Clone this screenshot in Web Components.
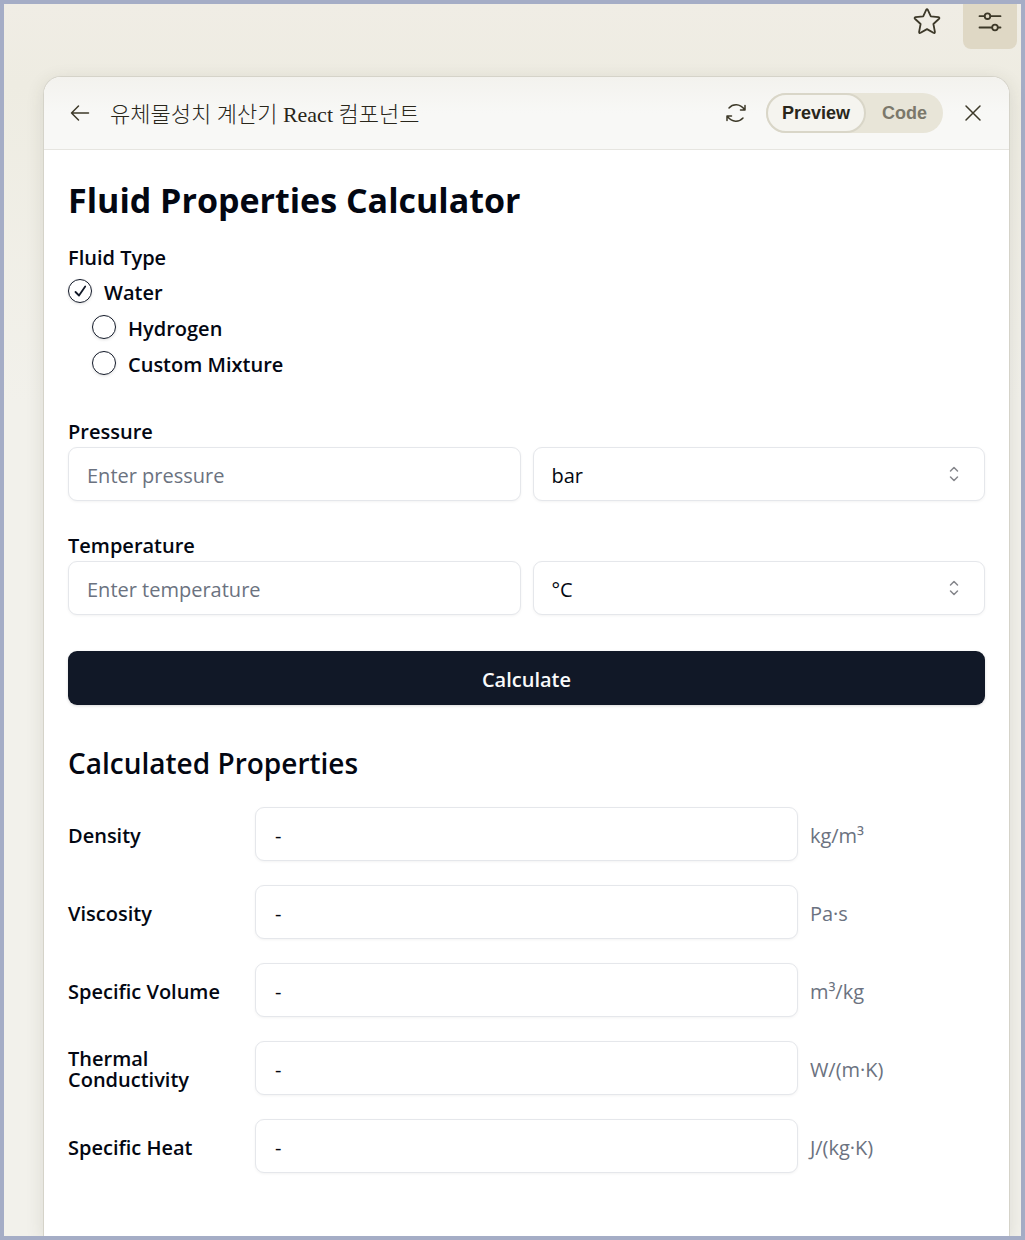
<!DOCTYPE html>
<html lang="ko">
<head>
<meta charset="UTF-8">
<meta name="viewport" content="width=device-width, initial-scale=1.0">
<title>Fluid Properties Calculator</title>
<style>
    body {
        margin: 0;
        font-family: "Segoe UI", "Open Sans", "Noto Sans", sans-serif;
        color: #030712;
    }
</style>
</head>
<body>
<app-shell>
    <top-bar slot="top"></top-bar>
    <artifact-panel title-text="유체물성치 계산기 React 컴포넌트">
        <fluid-calculator></fluid-calculator>
    </artifact-panel>
</app-shell>

<script>
// Window frame: coloured border, toolbar on top, panel below
class AppShell extends HTMLElement {
    constructor() {
        super();
        this.attachShadow({ mode: 'open' });
        this.shadowRoot.innerHTML = `
            <style>
                :host {
                    display: flex;
                    flex-direction: column;
                    box-sizing: border-box;
                    min-height: 100vh;
                    border: 4px solid #a5adc6;
                    background: linear-gradient(#f0ede5, #eeece2 80px, #f2f1eb 400px);
                }
                main {
                    flex: 1;
                    display: flex;
                    flex-direction: column;
                    margin: 27px 11px 0 39px;
                }
            </style>
            <slot name="top"></slot>
            <main><slot></slot></main>
        `;
    }
}
customElements.define('app-shell', AppShell);

class TopBar extends HTMLElement {
    constructor() {
        super();
        this.attachShadow({ mode: 'open' });
        this.shadowRoot.innerHTML = `
            <style>
                :host {
                    display: flex;
                    justify-content: flex-end;
                    gap: 9px;
                    padding-right: 4px;
                }
                button {
                    display: grid;
                    justify-items: center;
                    width: 54px;
                    height: 45px;
                    padding: 3px 0 0;
                    border: 0;
                    border-radius: 0 0 8px 8px;
                    background: none;
                    color: #3d3929;
                    cursor: pointer;
                }
                .active {
                    background: #dfd8c5;
                }
                svg {
                    fill: none;
                    stroke: currentColor;
                    stroke-width: 1.8;
                    stroke-linecap: round;
                    stroke-linejoin: round;
                }
            </style>
            <button type="button" aria-label="Star">
                <svg width="30" height="30" viewBox="0 0 30 30">
                    <path d="M14.2 2.8Q15 1.400 15.800 2.800L18.800 9.400L26.400 10.200Q28.200 10.600 26.800 12L21.400 17L22.900 24.800Q23 26.600 21.400 25.800L15 22.100L8.600 25.800Q7 26.600 7.100 24.800L8.600 17L3.200 12Q1.800 10.600 3.600 10.200L11.200 9.400Z"/>
                </svg>
            </button>
            <button class="active" type="button" aria-label="Settings">
                <svg width="30" height="30" viewBox="0 0 30 30">
                    <path d="M4.500 9.200H9.500M15.500 9.200H25.500M4.500 20.500H17M23 20.500H25.500"/>
                    <circle cx="12.500" cy="9.200" r="2.800"/>
                    <circle cx="20" cy="20.500" r="2.800"/>
                </svg>
            </button>
        `;
    }
}
customElements.define('top-bar', TopBar);

class ArtifactPanel extends HTMLElement {
    constructor() {
        super();
        this.attachShadow({ mode: 'open' });
        this.shadowRoot.innerHTML = `
            <style>
                :host {
                    flex: 1;
                    display: flex;
                    flex-direction: column;
                    border: 1px solid #d5d3c9;
                    border-bottom: 0;
                    border-radius: 18px 18px 0 0;
                    background: #fff;
                    box-shadow: 0 4px 18px rgba(60, 57, 41, 0.12);
                    clip-path: inset(-30px -30px 0 -30px);
                }
                header {
                    display: flex;
                    align-items: center;
                    height: 72px;
                    padding: 0 24px;
                    border-bottom: 1px solid #e6e5e0;
                    border-radius: 17px 17px 0 0;
                    background: linear-gradient(#f3f2ee, #f8f8f6 50%);
                    color: #29261b;
                }
                h2 {
                    flex: 1;
                    margin: 0 0 0 18px;
                    padding-top: 3px;
                    font: 300 22px/30px "Liberation Serif", "Noto Sans CJK KR", serif;
                    white-space: nowrap;
                }
                button {
                    border: 0;
                    background: none;
                    color: inherit;
                    cursor: pointer;
                }
                .icon {
                    display: grid;
                    padding: 0;
                }
                svg {
                    fill: none;
                    stroke: #3d3929;
                    stroke-width: 1.5;
                    stroke-linecap: round;
                    stroke-linejoin: round;
                }
                .tabs {
                    display: flex;
                    margin: 0 18px;
                    border-radius: 20px;
                    background: #e8e5d8;
                }
                .tabs button {
                    height: 40px;
                    padding: 0 14px;
                    border: 2px solid transparent;
                    border-radius: 20px;
                    font: 700 18px/24px "Liberation Sans", sans-serif;
                    color: #7b786b;
                }
                .tabs .selected {
                    border-color: #d9d6c8;
                    background: #f5f4ef;
                    color: #29261b;
                }
            </style>
            <header>
                <button class="icon" type="button" aria-label="Back">
                    <svg width="24" height="24" viewBox="0 0 24 24"><path d="M20.500 12H3.500M10.500 5L3.500 12L10.500 19"/></svg>
                </button>
                <h2></h2>
                <button class="icon" type="button" aria-label="Refresh">
                    <svg width="24" height="24" viewBox="0 0 24 24">
                        <path d="M5 7Q8 3.600 12.500 3.800Q17 4 20.800 8.800M21 4.500V9H16.500M19 17Q16 20.400 11.500 20.200Q7 20 3.200 15.200M3 19.500V15H7.500"/>
                    </svg>
                </button>
                <div class="tabs" role="tablist">
                    <button class="selected" type="button" role="tab" aria-selected="true">Preview</button>
                    <button type="button" role="tab" aria-selected="false">Code</button>
                </div>
                <button class="icon" type="button" aria-label="Close">
                    <svg width="24" height="24" viewBox="0 0 24 24"><path d="M5 5L19 19M19 5L5 19"/></svg>
                </button>
            </header>
            <slot></slot>
        `;
    }

    connectedCallback() {
        this.shadowRoot.querySelector('h2').textContent = this.getAttribute('title-text');
    }
}
customElements.define('artifact-panel', ArtifactPanel);

// Label over a number input and a unit select
class UnitField extends HTMLElement {
    constructor() {
        super();
        this.attachShadow({ mode: 'open' });
    }

    connectedCallback() {
        const units = this.getAttribute('units').split(',');
        this.shadowRoot.innerHTML = `
            <style>
                :host {
                    display: block;
                }
                label {
                    display: block;
                    padding-bottom: 6px;
                    font-weight: 600;
                    line-height: 18px;
                }
                .row {
                    display: grid;
                    grid-template-columns: 1fr 1fr;
                    gap: 12px;
                }
                input, select {
                    box-sizing: border-box;
                    width: 100%;
                    height: 54px;
                    padding: 3px 18px 0;
                    border: 1px solid #e5e7eb;
                    border-radius: 9px;
                    background: #fff;
                    box-shadow: 0 1px 3px rgba(0, 0, 0, 0.05);
                    font: inherit;
                    color: inherit;
                    appearance: none;
                }
                input::placeholder {
                    color: #6b7280;
                    opacity: 1;
                }
                .select {
                    display: grid;
                    align-items: center;
                }
                .select > * {
                    grid-area: 1 / 1;
                }
                svg {
                    justify-self: end;
                    margin-right: 19px;
                    fill: none;
                    stroke: #85868b;
                    stroke-width: 1.5;
                    stroke-linecap: round;
                    stroke-linejoin: round;
                    pointer-events: none;
                }
            </style>
            <label for="value">${this.getAttribute('label')}</label>
            <div class="row">
                <input id="value" type="text" inputmode="decimal" placeholder="${this.getAttribute('placeholder')}">
                <div class="select">
                    <select aria-label="${this.getAttribute('label')} unit">
                        ${units.map(u => `<option>${u}</option>`).join('')}
                    </select>
                    <svg width="24" height="24" viewBox="0 0 24 24"><path d="M8.500 9L12 5.500L15.500 9M8.500 15L12 18.500L15.500 15"/></svg>
                </div>
            </div>
        `;
    }
}
customElements.define('unit-field', UnitField);

// Read-only result: name, value box, unit
class PropertyRow extends HTMLElement {
    constructor() {
        super();
        this.attachShadow({ mode: 'open' });
    }

    connectedCallback() {
        this.shadowRoot.innerHTML = `
            <style>
                :host {
                    display: grid;
                    grid-template-columns: 10fr 31fr 10fr;
                    align-items: center;
                    gap: 12px;
                }
                label {
                    padding-top: 2px;
                    font-weight: 600;
                    line-height: 21px;
                }
                input {
                    box-sizing: border-box;
                    width: 100%;
                    height: 54px;
                    padding: 2px 19px 0;
                    border: 1px solid #e5e7eb;
                    border-radius: 9px;
                    background: #fff;
                    box-shadow: 0 1px 3px rgba(0, 0, 0, 0.05);
                    font: inherit;
                    color: inherit;
                }
                .unit {
                    padding-top: 3px;
                    color: #6b7280;
                }
            </style>
            <label for="result">${this.getAttribute('label')}</label>
            <input id="result" type="text" value="-" readonly>
            <span class="unit">${this.getAttribute('unit')}</span>
        `;
    }
}
customElements.define('property-row', PropertyRow);

class FluidCalculator extends HTMLElement {
    constructor() {
        super();
        this.attachShadow({ mode: 'open' });
        this.shadowRoot.innerHTML = `
            <style>
                :host {
                    display: block;
                    padding: 24px;
                    font-size: 20px;
                    line-height: 30px;
                }
                h1 {
                    margin: 0 0 20px;
                    font-size: 34px;
                    font-weight: 700;
                    line-height: 52px;
                }
                form {
                    display: flex;
                    flex-direction: column;
                    gap: 36px;
                }
                fieldset {
                    display: flex;
                    flex-direction: column;
                    gap: 12px;
                    min-width: 0;
                    margin: 0;
                    padding: 0 0 12px;
                    border: 0;
                    font-weight: 600;
                }
                legend {
                    margin-bottom: 9px;
                    padding: 0;
                    line-height: 24px;
                }
                .option {
                    display: grid;
                    grid-template-columns: 24px auto;
                    justify-content: start;
                    align-items: center;
                    column-gap: 12px;
                }
                .option label {
                    padding-top: 3px;
                    line-height: 21px;
                }
                .nested {
                    margin-left: 24px;
                }
                .option input, .option svg {
                    grid-area: 1 / 1;
                }
                .option input {
                    width: 24px;
                    height: 24px;
                    margin: 0;
                    border: 1px solid #111827;
                    border-radius: 50%;
                    box-shadow: 0 1px 3px rgba(0, 0, 0, 0.12);
                    appearance: none;
                }
                .option svg {
                    visibility: hidden;
                    fill: none;
                    stroke: #111827;
                    stroke-width: 1.8;
                    stroke-linecap: round;
                    stroke-linejoin: round;
                    pointer-events: none;
                }
                .option input:checked + svg {
                    visibility: visible;
                }
                button {
                    height: 54px;
                    padding: 3px 24px 0;
                    border: 0;
                    border-radius: 9px;
                    background: #111827;
                    box-shadow: 0 1px 3px rgba(0, 0, 0, 0.15);
                    font: inherit;
                    font-weight: 600;
                    color: #f9fafb;
                    cursor: pointer;
                }
                h2 {
                    margin: 36px 0 22px;
                    font-size: 28px;
                    font-weight: 600;
                    line-height: 44px;
                }
                .results {
                    display: flex;
                    flex-direction: column;
                    gap: 24px;
                }
            </style>
            <h1>Fluid Properties Calculator</h1>
            <form>
                <fieldset>
                    <legend>Fluid Type</legend>
                    ${this._option('water', 'Water', true)}
                    ${this._option('hydrogen', 'Hydrogen')}
                    ${this._option('custom', 'Custom Mixture')}
                </fieldset>
                <unit-field label="Pressure" placeholder="Enter pressure" units="bar,Pa,kPa,MPa"></unit-field>
                <unit-field label="Temperature" placeholder="Enter temperature" units="°C,K,°F"></unit-field>
                <button type="button">Calculate</button>
            </form>
            <h2>Calculated Properties</h2>
            <div class="results">
                <property-row label="Density" unit="kg/m³"></property-row>
                <property-row label="Viscosity" unit="Pa·s"></property-row>
                <property-row label="Specific Volume" unit="m³/kg"></property-row>
                <property-row label="Thermal Conductivity" unit="W/(m·K)"></property-row>
                <property-row label="Specific Heat" unit="J/(kg·K)"></property-row>
            </div>
        `;
    }

    _option(id, text, checked) {
        return `
            <div class="option ${checked ? '' : 'nested'}">
                <input id="${id}" type="radio" name="fluid" value="${id}" ${checked ? 'checked' : ''}>
                <svg width="24" height="24" viewBox="0 0 24 24"><path d="M7.500 13L11 16.500L17.200 7.500"/></svg>
                <label for="${id}">${text}</label>
            </div>
        `;
    }
}
customElements.define('fluid-calculator', FluidCalculator);
</script>
</body>
</html>
